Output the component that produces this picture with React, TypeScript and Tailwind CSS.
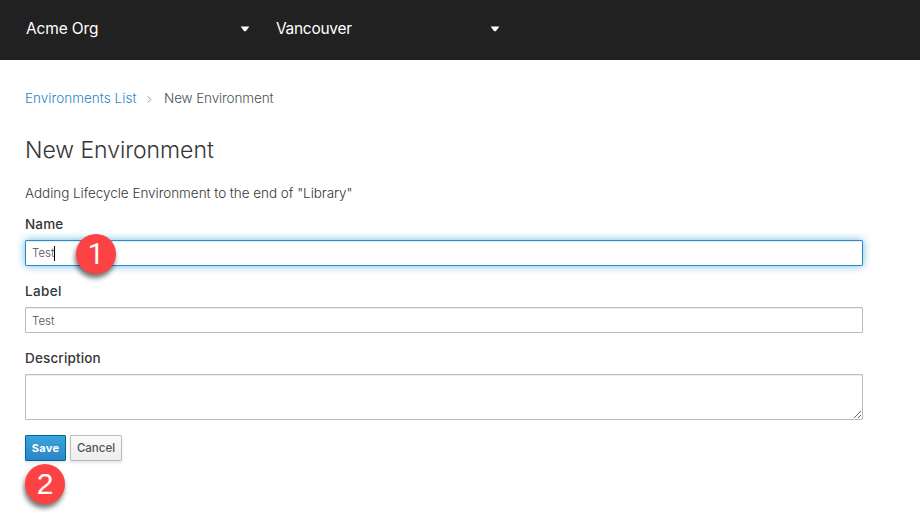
import React from "react";

function Caret() {
  return (
    <svg width="10" height="6" viewBox="0 0 10 6" className="mb-px shrink-0 fill-white">
      <path d="M0.6 0.5H9.4L6 4.9Q5 5.7 4 4.9Z" />
    </svg>
  );
}

function Picker({ label, tracking }: { label: string; tracking: string }) {
  return (
    <button className="flex h-[58px] w-[250px] items-center justify-between pr-[26px] text-left text-[15.5px] text-white">
      <span className={tracking}>{label}</span>
      <Caret />
    </button>
  );
}

function Badge({ n, place }: { n: string; place: string }) {
  return (
    <span
      className={`absolute flex size-10 items-center justify-center rounded-full bg-[#fd4244] leading-none text-white shadow-[-1px_4px_5px_rgba(0,0,0,0.55)] ${place}`}
    >
      {n}
    </span>
  );
}

const label = "block h-[22px] text-[13.5px] leading-[22px] font-medium text-[#363636]";
const field =
  "block h-[26px] w-full rounded-[1px] border bg-white px-[6px] text-[11.5px] text-[#4d5258] outline-none";

export default function App() {
  return (
    <div className="h-[512px] w-[920px] overflow-hidden bg-white font-['Inter',sans-serif] text-[#363636]">
      <header className="flex h-[60px] bg-[#212121] pl-[26px]">
        <Picker label="Acme Org" tracking="tracking-[-0.15px]" />
        <Picker label="Vancouver" tracking="tracking-[-0.3px]" />
      </header>
      <main className="w-[863px] pl-[25px]">
        <nav className="flex h-[77px] items-center text-[13.5px] font-light">
          <a className="w-[122px] tracking-[0.03px] whitespace-nowrap text-[#2b85c7]">Environments List</a>
          <svg width="5" height="7" viewBox="0 0 5 7" className="mt-px mr-[12px] fill-none stroke-[#8b8d8f]">
            <path d="M0.8 0.5L3.8 3.5L0.8 6.5" />
          </svg>
          <span className="tracking-[-0.12px] text-[#4d5258]">New Environment</span>
        </nav>
        <h1 className="h-[26px] text-[23px] leading-[26px] font-light tracking-[-0.05px]">New Environment</h1>
        <p className="mt-[20px] h-[20px] text-[13.5px] leading-[20px] font-light tracking-[-0.04px]">
          Adding Lifecycle Environment to the end of "Library"
        </p>
        <form className="mt-[10px]">
          <div className="relative h-[67px]">
            <label className={`${label} tracking-[0.15px]`}>Name</label>
            <div className={`${field} mt-[5px] flex items-center border-[#2b8ccb] shadow-[inset_0_1px_1px_rgba(3,3,3,0.075),0_0_8px_rgba(0,136,206,0.6)]`}>
              <span className="pt-[2px] font-light">Test</span>
              <span className="h-[15px] w-px bg-black" />
            </div>
            <Badge n="1" place="left-[51px] top-[21px] pt-px font-['Roboto',sans-serif] text-[29px]" />
          </div>
          <div className="h-[67px]">
            <label className={`${label} tracking-[0.35px]`}>Label</label>
            <input
              className={`${field} mt-[5px] border-[#bbb] pt-px font-light shadow-[inset_0_1px_1px_rgba(3,3,3,0.075)]`}
              defaultValue="Test"
            />
          </div>
          <label className={`${label} tracking-[0.15px]`}>Description</label>
          <textarea className="mt-[5px] block h-[46px] w-full resize rounded-[1px] border border-[#bbb] shadow-[inset_0_1px_1px_rgba(3,3,3,0.075)]" />
          <div className="relative mt-[15px] flex gap-[4px]">
            <button className="h-[26px] w-[41px] rounded-[1px] border border-[#00659c] bg-linear-to-b from-[#39a5dc] to-[#2b85c7] pt-px text-[11px] font-bold tracking-[0.3px] text-white shadow-[0_2px_3px_rgba(3,3,3,0.1)]">
              Save
            </button>
            <button className="h-[26px] w-[52px] rounded-[1px] border border-[#bbb] bg-linear-to-b from-[#fafafa] to-[#ededed] pt-px text-[11.5px] font-medium text-[#4d5258] shadow-[0_2px_3px_rgba(3,3,3,0.1)]">
              Cancel
            </button>
            <Badge n="2" place="left-0 top-[29px] font-['Liberation_Sans',sans-serif] text-[30px]" />
          </div>
        </form>
      </main>
    </div>
  );
}
